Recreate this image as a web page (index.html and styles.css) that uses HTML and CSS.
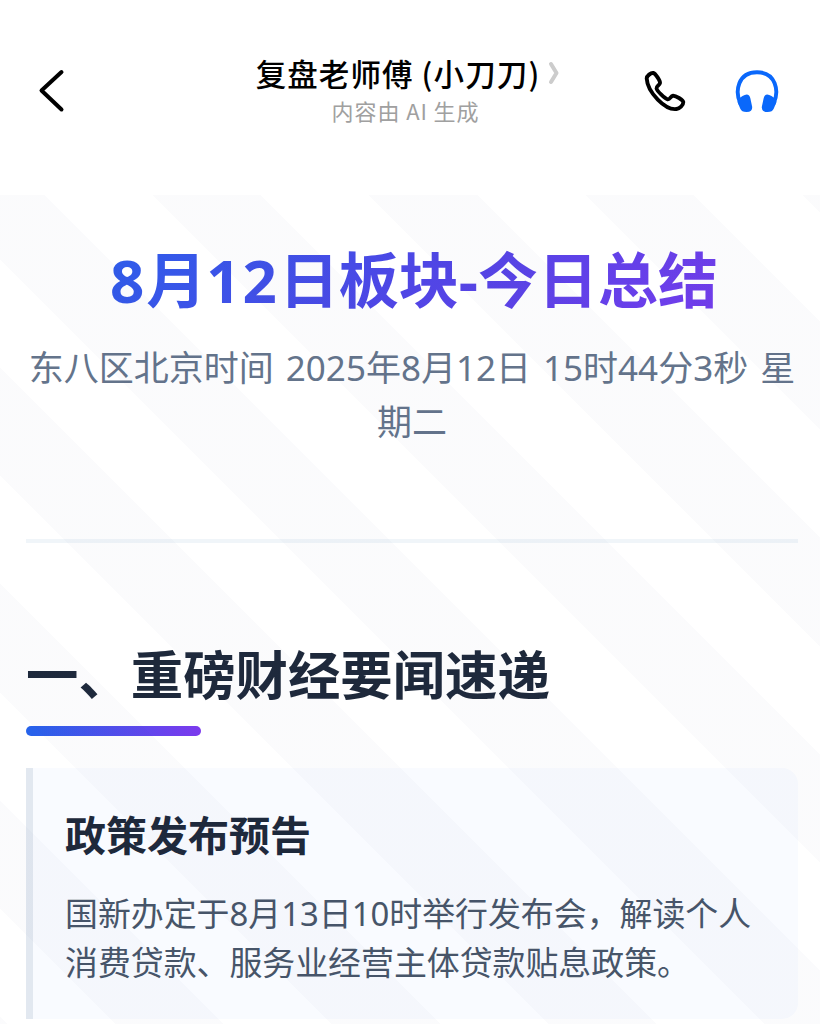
FILE: index.html
```
<!DOCTYPE html>
<html lang="zh-CN">
<head>
  <meta charset="utf-8">
  <title>8月12日板块-今日总结</title>
  <link rel="stylesheet" href="styles.css">
</head>
<body>
  <header class="topbar">
    <button class="icon-btn back">
      <svg width="28" height="46" viewBox="0 0 28 46"><path d="M24.500 4 L4.500 22.500 L24.500 41.500" fill="none" stroke="#000" stroke-width="4" stroke-linecap="round" stroke-linejoin="round"/></svg>
    </button>
    <div class="chat">
      <div class="chat-name">
        <span>复盘老师傅 (小刀刀)</span>
        <svg width="12" height="26" viewBox="0 0 12 26"><path d="M3 4 L8.5 13 L3 22" fill="none" stroke="#ccc" stroke-width="4" stroke-linecap="round" stroke-linejoin="round"/></svg>
      </div>
      <div class="chat-tip">内容由 AI 生成</div>
    </div>
    <div class="actions">
      <button class="icon-btn">
        <svg width="44" height="44" viewBox="0 0 44 44"><path d="M3.700 9.500 C3.600 7 8 3.500 10.300 4 C12.500 4.500 17.300 12 17 14 C16.700 16.200 12.900 17 13.500 19.400 C14.300 22.400 21.800 29.600 24.600 30.300 C27 30.900 27.600 26.900 30 26.700 C32.400 26.500 40.200 30.800 40.300 33.200 C40.400 36.300 36.500 39.600 33.500 40 C22.500 41.500 4.500 23.500 3.700 9.500 Z" fill="none" stroke="#000" stroke-width="3.9" stroke-linejoin="round"/></svg>
      </button>
      <button class="icon-btn">
        <svg width="44" height="44" viewBox="0 0 44 44">
          <path d="M5.500 35 C-0.500 22 3 3.200 22 3.200 C41 3.200 44.500 22 38.500 35" fill="none" stroke="#0a68fb" stroke-width="3.9"/>
          <path d="M7.500 27 Q14 23 15.400 29.500 L17.200 38 Q17.600 43 11.500 43 Q6.500 43 5.200 39.500 L2.500 33 Q3.500 29 7.500 27 Z" fill="#0a68fb"/>
          <path d="M36.500 27 Q30 23 28.600 29.500 L26.800 38 Q26.400 43 32.500 43 Q37.500 43 38.800 39.500 L41.500 33 Q40.500 29 36.500 27 Z" fill="#0a68fb"/>
        </svg>
      </button>
    </div>
  </header>

  <main class="page">
    <div class="report-head">
      <h1><span class="num">8</span>月<span class="num">12</span>日板块-今日总结</h1>
      <p>东八区北京时间 2025年8月12日 15时44分3秒 星期二</p>
    </div>

    <section>
      <h2>一、重磅财经要闻速递</h2>
      <div class="card">
        <h3>政策发布预告</h3>
        <p>国新办定于8月13日10时举行发布会，解读个人消费贷款、服务业经营主体贷款贴息政策。</p>
      </div>
    </section>
  </main>
</body>
</html>
```
FILE: styles.css
```
* {
  box-sizing: border-box;
}
body {
  margin: 0;
  height: 1024px;
  overflow: hidden;
  background: #fff;
  font-family: "Noto Sans", "Noto Sans CJK SC", sans-serif;
}
h1, h2, h3, p {
  margin: 0;
}
svg {
  display: block;
}

/* top bar */
.topbar {
  display: grid;
  grid-template-columns: 220px 1fr 220px;
  height: 195px;
  padding-top: 54px;
  font-family: "Noto Sans CJK SC", sans-serif;
}
.icon-btn {
  padding: 0;
  border: 0;
  background: none;
}
.back {
  justify-self: start;
  align-self: start;
  margin: 14px 0 0 37px;
}
.chat {
  display: flex;
  flex-direction: column;
  align-items: center;
}
.chat-name {
  display: flex;
  align-items: center;
  gap: 8px;
  margin-right: 4px;
  font-size: 30.5px;
  font-weight: 500;
  line-height: 38px;
  letter-spacing: 1.1px;
  white-space: nowrap;
}
.chat-tip {
  margin-right: 9px;
  font-size: 22px;
  line-height: 37px;
  letter-spacing: 0.9px;
  color: #a0a0a0;
}
.actions {
  display: flex;
  gap: 48px;
  padding: 14px 0 0 43px;
  height: 60px;
}

/* report */
.page {
  position: relative;
  height: 829px;
  padding: 47px 22px 0 26px;
  overflow: hidden;
}
.page::after {
  content: "";
  position: absolute;
  inset: 0;
  pointer-events: none;
  background: repeating-linear-gradient(45deg, rgba(40, 50, 120, 0.02) 0 5px, transparent 5px 81.6px, rgba(40, 50, 120, 0.02) 81.6px 153.1px);
}
.report-head {
  height: 301px;
  border-bottom: 4px solid #f0f5f9;
  text-align: center;
}
h1 {
  padding-left: 4px;
  font-size: 60px;
  line-height: 77px;
  background: linear-gradient(135deg, #2563eb, #4f46e5 50%, #7c3aed);
  -webkit-background-clip: text;
  background-clip: text;
  color: transparent;
}
.num {
  letter-spacing: 2px;
}
.report-head p {
  margin: 22px -5px 0;
  font-size: 35px;
  line-height: 54px;
  word-spacing: 3px;
  color: #64748b;
}
h2 {
  margin-top: 97px;
  font-size: 52.4px;
  line-height: 70px;
  color: #1e293b;
}
h2::after {
  content: "";
  display: block;
  width: 175px;
  height: 10px;
  margin-top: 16px;
  border-radius: 5px;
  background: linear-gradient(90deg, #2563eb, #7c3aed);
}
.card {
  height: 251px;
  margin-top: 32px;
  padding: 40px 30px 0 32px;
  border-left: 7px solid #e2e8f0;
  border-radius: 0 16px 16px 0;
  background: #f9fbff;
}
h3 {
  font-size: 41px;
  line-height: 54px;
  color: #1e293b;
}
.card p {
  margin-top: 27px;
  font-size: 32.9px;
  line-height: 49px;
  color: #475569;
}
```
